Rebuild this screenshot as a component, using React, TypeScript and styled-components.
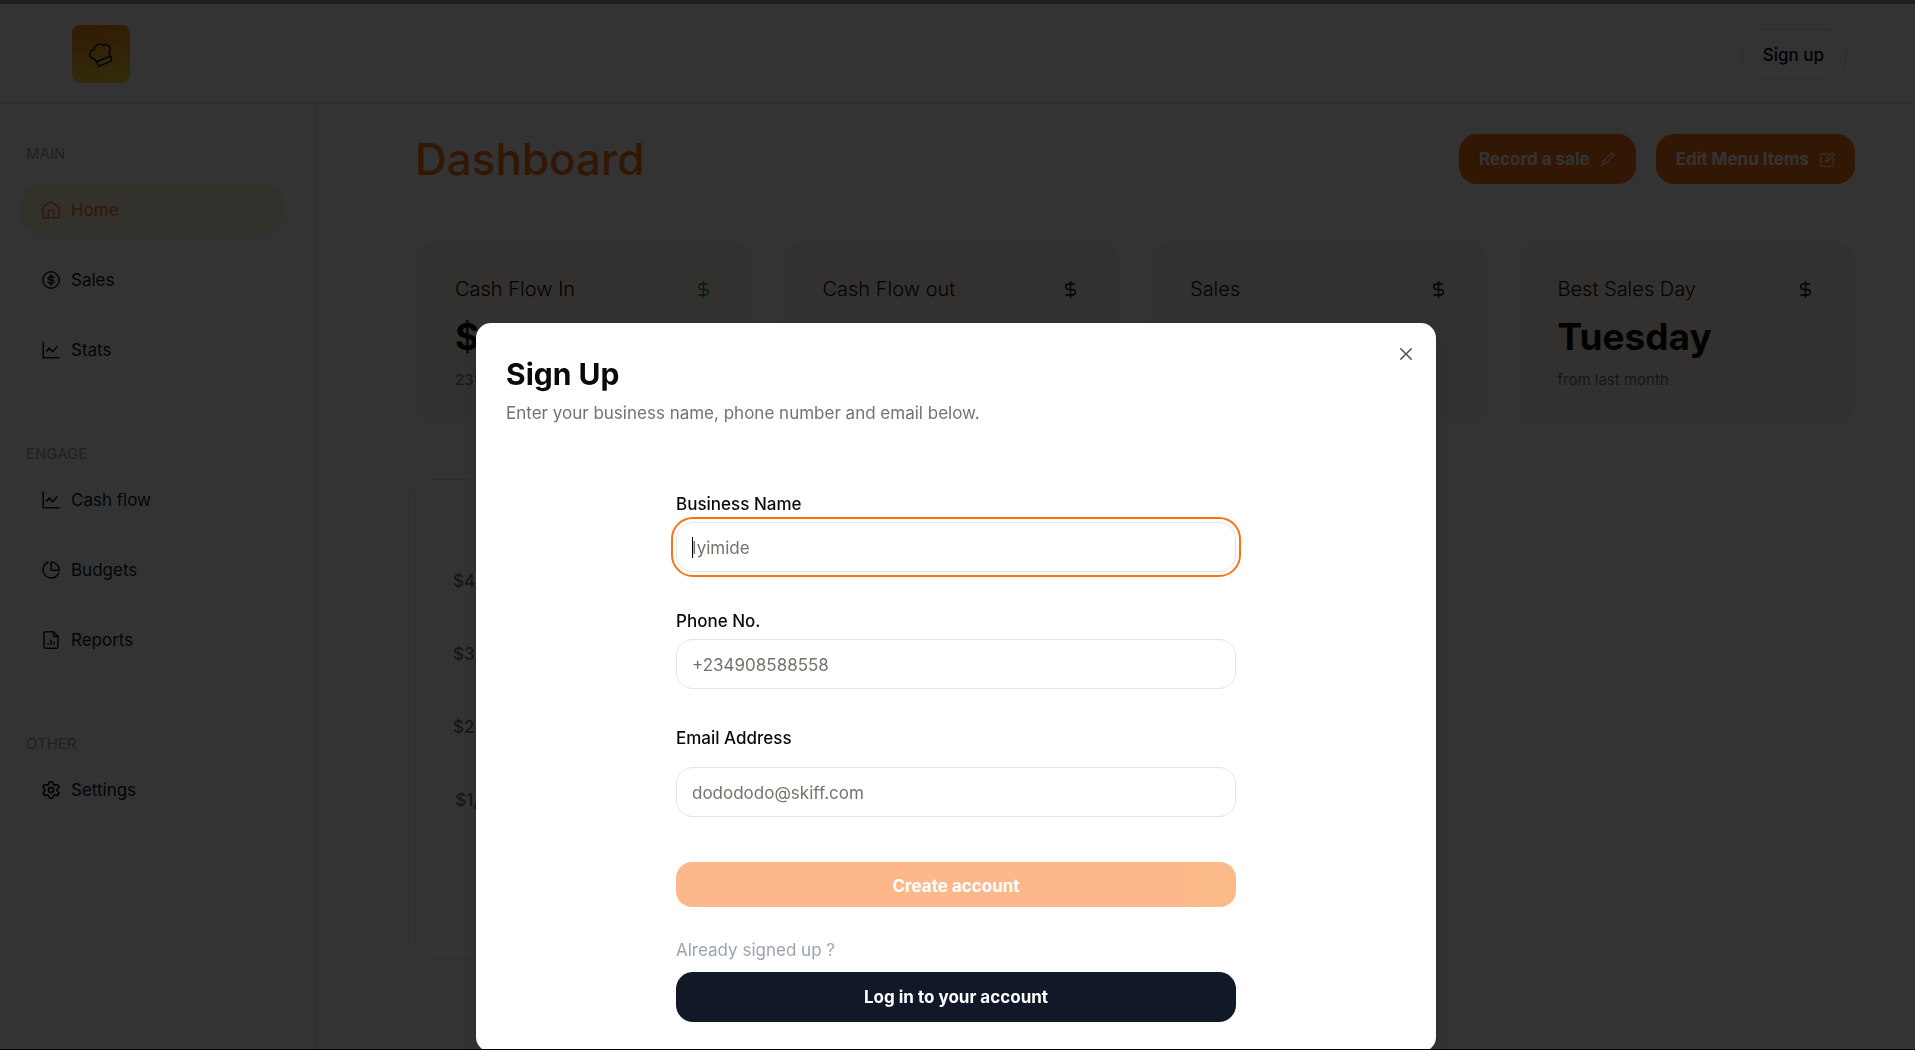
import React from 'react';
import styled, { createGlobalStyle, css } from 'styled-components';
import { DollarSign, Settings } from 'lucide-react';
import { RxCross2, RxPencil1, RxPencil2 } from 'react-icons/rx';

const orange = '#f97316';
const ink = '#0c0a09';
const line = '#e7e5e4';

const GlobalStyle = createGlobalStyle`
  *, *::before, *::after { box-sizing: border-box; }
  body {
    margin: 0;
    background: #fff;
    color: ${ink};
    font-family: Inter, "Liberation Sans", sans-serif;
    font-size: 17px;
    line-height: 24px;
  }
  h1, h2, p { margin: 0; }
  button, input { font: inherit; }
`;

const Page = styled.div`
  min-height: 100vh;
  display: flex;
  flex-direction: column;
  border-top: 4px solid #919d99;
`;

const Header = styled.header`
  height: 100px;
  padding: 1px 69px 0 72px;
  display: flex;
  align-items: center;
  justify-content: space-between;
  border-bottom: 1px solid #d6d8dc;
`;

const Logo = styled.a`
  width: 58px;
  height: 58px;
  padding-top: 2px;
  display: grid;
  place-items: center;
  border-radius: 8px;
  background: linear-gradient(170deg, #f97f10, #f5dc3c);
  color: #000;
`;

const SignUpLink = styled.button`
  height: 50px;
  padding: 2px 21px 0;
  border: 1px solid ${line};
  border-radius: 18px;
  background: #fff;
  color: #020617;
  font-weight: 500;
`;

const Body = styled.div`
  flex: 1;
  display: flex;
`;

const Sidebar = styled.nav`
  width: 316px;
  flex: none;
  padding: 40px 30px 40px 21px;
  display: flex;
  flex-direction: column;
  gap: 70px;
  border-right: 1px solid #dcdee2;
`;

const NavGroup = styled.section<{ $gap: number }>`
  display: flex;
  flex-direction: column;
  gap: ${p => p.$gap}px;
`;

const GroupTitle = styled.h2`
  padding-left: 5px;
  color: #9ca3af;
  font-size: 15px;
  line-height: 20px;
  font-weight: 400;
`;

const NavList = styled.div`
  display: flex;
  flex-direction: column;
  gap: 20px;
`;

const NavItem = styled.a<{ $active?: boolean }>`
  height: 50px;
  padding: 2px 20px 0 21px;
  display: flex;
  align-items: center;
  gap: 11px;
  border-radius: 20px;
  color: #111827;
  text-decoration: none;
  ${p => p.$active && css`
    background: #fef3d7;
    color: ${orange};
  `}
`;

const Main = styled.main`
  flex: 1;
  min-width: 0;
  padding: 30px 60px 60px 99px;
  display: flex;
  flex-direction: column;
  gap: 60px;
`;

const TitleRow = styled.div`
  display: flex;
  align-items: center;
  justify-content: space-between;
`;

const PageTitle = styled.h1`
  color: ${orange};
  font-size: 44px;
  line-height: 50px;
  font-weight: 500;
`;

const Actions = styled.div`
  display: flex;
  gap: 20px;
`;

const ActionButton = styled.button`
  height: 50px;
  padding: 0 20px;
  display: flex;
  align-items: center;
  gap: 9px;
  border: 0;
  border-radius: 18px;
  background: ${orange};
  color: #fff;
  font-weight: 700;
`;

const Cards = styled.div`
  display: grid;
  grid-template-columns: repeat(4, 1fr);
  gap: 30px;
`;

const Card = styled.article`
  padding: 30px 40px 29px;
  display: flex;
  flex-direction: column;
  gap: 9px;
  border-radius: 16px;
  background: #fff5e8;
  box-shadow: 0 10px 18px rgba(17, 24, 39, 0.03);
`;

const CardHead = styled.div`
  display: flex;
  align-items: center;
  justify-content: space-between;
  font-size: 20px;
  line-height: 30px;
  font-weight: 300;
`;

const CardValue = styled.p`
  font-size: 37px;
  line-height: 48px;
  font-weight: 700;
`;

const CardNote = styled.p`
  color: #6b7280;
  font-size: 15px;
  line-height: 20px;
`;

const ChartGrid = styled.div`
  display: grid;
  grid-template-columns: repeat(2, 1fr);
  gap: 30px;
`;

const ChartPanel = styled.section`
  height: 480px;
  padding: 89px 37px;
  border: 1px solid ${line};
  border-radius: 15px;
`;

const Ticks = styled.div`
  width: 58px;
  display: flex;
  flex-direction: column;
  gap: 49px;
  color: #6b7280;
  font-weight: 500;
  text-align: right;
`;

const Overlay = styled.div`
  position: fixed;
  inset: 0;
  padding: 323px 3px 0 0;
  display: flex;
  align-items: flex-start;
  justify-content: center;
  overflow: hidden;
  background: rgba(0, 0, 0, 0.8);
  border-bottom: 1px solid #000;
`;

const Dialog = styled.section`
  position: relative;
  width: 100%;
  max-width: 960px;
  flex: none;
  padding: 30px;
  border-radius: 15px;
  background: #fff;
  box-shadow: 0 10px 20px rgba(0, 0, 0, 0.15);
`;

const DialogTitle = styled.h2`
  font-size: 30px;
  line-height: 42px;
  font-weight: 700;
`;

const DialogText = styled.p`
  margin-top: 6px;
  color: #78716c;
`;

const CloseButton = styled.button`
  position: absolute;
  top: 21px;
  right: 20px;
  width: 20px;
  height: 20px;
  padding: 0;
  border: 0;
  background: none;
  color: #555;
`;

const Form = styled.form`
  max-width: 560px;
  margin: 69px auto 0;
  display: flex;
  flex-direction: column;
`;

const Field = styled.div<{ $gap: number }>`
  margin-bottom: 39px;
  display: flex;
  flex-direction: column;
  gap: ${p => p.$gap}px;
`;

const Label = styled.label`
  line-height: 20px;
  font-weight: 500;
`;

const Input = styled.input`
  width: 100%;
  height: 50px;
  padding: 2px 15px 0;
  border: 1px solid ${line};
  border-radius: 17px;
  background: #fff;
  color: ${ink};
  &::placeholder { color: #78716c; opacity: 1; }
  &:focus {
    outline: 2px solid ${orange};
    outline-offset: 3px;
  }
  &:focus:placeholder-shown {
    caret-color: transparent;
    background: linear-gradient(#000, #000) 15px center / 1px 21px no-repeat #fff;
  }
`;

const CreateButton = styled.button`
  height: 45px;
  margin-top: 6px;
  padding: 2px 20px 0;
  border: 0;
  border-radius: 16px;
  background: ${orange};
  color: #fff;
  font-weight: 700;
  opacity: 0.5;
`;

const Hint = styled.p`
  margin: 31px 0 10px;
  color: #9ca3af;
`;

const LoginButton = styled.button`
  height: 50px;
  padding: 0 20px;
  border: 0;
  border-radius: 17px;
  background: #111827;
  color: #fff;
  font-weight: 700;
`;

function Glyph({ children }: { children: React.ReactNode }) {
  return (
    <svg width="18" height="18" viewBox="0 0 18 18" fill="none" stroke="currentColor"
      strokeWidth="1.5" strokeLinecap="round" strokeLinejoin="round" aria-hidden="true">
      {children}
    </svg>
  );
}

const HomeIcon = () => (
  <Glyph>
    <path d="M1 6.900c0-.6.2-1 .7-1.300L8.200 1.200c.5-.3 1.100-.3 1.600 0l6.500 4.400c.5.3.7.7.7 1.300v8.800c0 .8-.5 1.300-1.300 1.300H2.300C1.500 17 1 16.500 1 15.700z" />
    <path d="M6.200 17v-6.700c0-.5.3-.8.8-.8h4c.5 0 .8.3.8.800V17" />
  </Glyph>
);

const SalesIcon = () => (
  <Glyph>
    <circle cx="9" cy="9" r="8.200" />
    <path d="M9 3.800v10.400M11.800 6.800c-.2-.8-.9-1.200-1.800-1.200H8.200C7 5.600 6.200 6.300 6.200 7.300S7 9 8.200 9h1.600c1.200 0 2 .7 2 1.700s-.8 1.700-2 1.700H8c-.9 0-1.700-.5-1.900-1.300" />
  </Glyph>
);

const ChartIcon = () => (
  <Glyph>
    <path d="M1.200 1v15.800H17" />
    <path d="M4.500 10.300L7.200 6.900l3.300 3.900 4.700-5" />
  </Glyph>
);

const BudgetIcon = () => (
  <Glyph>
    <path d="M6 1.300A8.200 8.200 0 1 0 16.900 11.600" />
    <path d="M9.200.9v8.300h8A8.200 8.200 0 0 0 9.200.9z" />
  </Glyph>
);

const ReportIcon = () => (
  <Glyph>
    <path d="M11.300.8H3.700C2.700.8 2 1.500 2 2.400v13.200c0 1 .7 1.600 1.700 1.600h10.600c1 0 1.700-.6 1.700-1.600V5.500z" />
    <path d="M11.300.8v3.400c0 .8.500 1.300 1.300 1.300H16M6 13.600v-.8M9 13.600V9.200M12 13.600v-2.300" />
  </Glyph>
);

const ChefHatIcon = () => (
  <svg width="24" height="24" viewBox="0 0 24 24" fill="none" stroke="currentColor"
    strokeWidth="1.3" strokeLinejoin="round" aria-hidden="true">
    <path d="M7.300 18.800L6 15.800C3.200 16.400.9 14.200.9 11.500.9 8.900 2.600 7 4.900 6.600 5 3.200 7.600.8 11 .9c1.500 0 2.600.600 3.300 1.500 2.700-1.500 6.300-.4 7 2.700.3 1.900-.2 3.400-1.500 4.600L21.700 13z" />
    <path d="M7.300 18.800L21.700 13l1 4.700L10 23.300z" />
  </svg>
);

const groups = [
  { title: 'MAIN', gap: 20, items: [
    { name: 'Home', icon: <HomeIcon />, active: true },
    { name: 'Sales', icon: <SalesIcon /> },
    { name: 'Stats', icon: <ChartIcon /> },
  ] },
  { title: 'ENGAGE', gap: 10, items: [
    { name: 'Cash flow', icon: <ChartIcon /> },
    { name: 'Budgets', icon: <BudgetIcon /> },
    { name: 'Reports', icon: <ReportIcon /> },
  ] },
  { title: 'OTHER', gap: 10, items: [
    { name: 'Settings', icon: <Settings size={18} viewBox="1.5 1.5 21 21" /> },
  ] },
] as { title: string; gap: number; items: { name: string; icon: React.ReactNode; active?: boolean }[] }[];

const cards = [
  { name: 'Cash Flow In', value: '$0', note: '23% from last month', color: '#00a000' },
  { name: 'Cash Flow out', value: '0', note: 'from last month', color: ink },
  { name: 'Sales', value: '0', note: 'from last month', color: ink },
  { name: 'Best Sales Day', value: 'Tuesday', note: 'from last month', color: ink },
];

const ticks = ['$4,000', '$3,000', '$2,000', '$1,000'];

const fields = [
  { id: 'business', label: 'Business Name', placeholder: 'Iyimide', type: 'text', gap: 8 },
  { id: 'phone', label: 'Phone No.', placeholder: '+234908588558', type: 'tel', gap: 8 },
  { id: 'email', label: 'Email Address', placeholder: 'dodododo@skiff.com', type: 'email', gap: 19 },
];

export default function App() {
  return (
    <>
      <GlobalStyle />
      <Page>
        <Header>
          <Logo href="#" aria-label="Home page"><ChefHatIcon /></Logo>
          <SignUpLink type="button">Sign up</SignUpLink>
        </Header>
        <Body>
          <Sidebar>
            {groups.map(group => (
              <NavGroup key={group.title} $gap={group.gap}>
                <GroupTitle>{group.title}</GroupTitle>
                <NavList>
                  {group.items.map(item => (
                    <NavItem key={item.name} href="#" $active={item.active}>
                      {item.icon}
                      {item.name}
                    </NavItem>
                  ))}
                </NavList>
              </NavGroup>
            ))}
          </Sidebar>
          <Main>
            <TitleRow>
              <PageTitle>Dashboard</PageTitle>
              <Actions>
                <ActionButton type="button">Record a sale <RxPencil1 size={17} /></ActionButton>
                <ActionButton type="button">Edit Menu Items <RxPencil2 size={17} /></ActionButton>
              </Actions>
            </TitleRow>
            <Cards>
              {cards.map(card => (
                <Card key={card.name}>
                  <CardHead>
                    {card.name}
                    <DollarSign size={19} strokeWidth={1.75} color={card.color} />
                  </CardHead>
                  <CardValue>{card.value}</CardValue>
                  <CardNote>{card.note}</CardNote>
                </Card>
              ))}
            </Cards>
            <ChartGrid>
              <ChartPanel>
                <Ticks>{ticks.map(tick => <span key={tick}>{tick}</span>)}</Ticks>
              </ChartPanel>
            </ChartGrid>
          </Main>
        </Body>
      </Page>
      <Overlay>
        <Dialog role="dialog" aria-modal="true" aria-labelledby="signup-title">
          <DialogTitle id="signup-title">Sign Up</DialogTitle>
          <DialogText>Enter your business name, phone number and email below.</DialogText>
          <CloseButton type="button" aria-label="Close"><RxCross2 size={20} /></CloseButton>
          <Form onSubmit={event => event.preventDefault()}>
            {fields.map((field, index) => (
              <Field key={field.id} $gap={field.gap}>
                <Label htmlFor={field.id}>{field.label}</Label>
                <Input id={field.id} type={field.type} placeholder={field.placeholder} autoFocus={index === 0} />
              </Field>
            ))}
            <CreateButton type="submit" disabled>Create account</CreateButton>
            <Hint>Already signed up ?</Hint>
            <LoginButton type="button">Log in to your account</LoginButton>
          </Form>
        </Dialog>
      </Overlay>
    </>
  );
}
